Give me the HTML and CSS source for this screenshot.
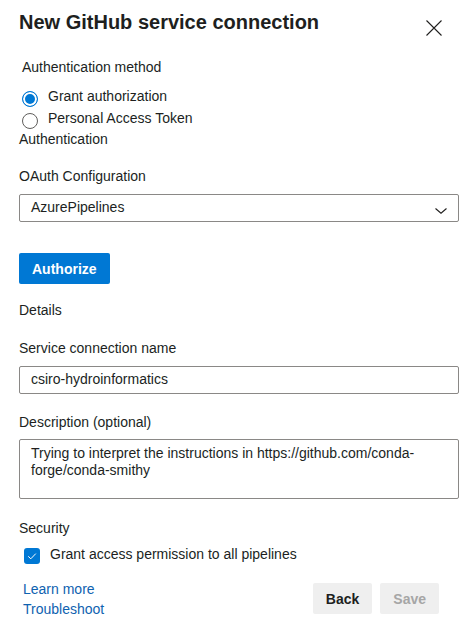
FILE: index.html
```html
<!DOCTYPE html>
<html lang="en">
<head>
<meta charset="utf-8">
<title>New GitHub service connection</title>
<link rel="stylesheet" href="styles.css">
</head>
<body>
<div class="dialog">
  <header class="header">
    <h1 class="title">New GitHub service connection</h1>
    <button class="close" aria-label="Close">
      <svg width="16" height="16" viewBox="0 0 16 16"><path d="M0.5 0.5 L15.5 15.5 M15.5 0.5 L0.5 15.5" stroke="#201f1e" stroke-width="1.1" fill="none"/></svg>
    </button>
  </header>

  <div class="auth-method">Authentication method</div>
  <div class="radio-group">
    <div class="radio-row"><span class="radio checked"></span><span>Grant authorization</span></div>
    <div class="radio-row"><span class="radio"></span><span>Personal Access Token</span></div>
  </div>
  <div class="section-title">Authentication</div>

  <div class="label label-oauth">OAuth Configuration</div>
  <div class="field dropdown">
    <span>AzurePipelines</span>
    <svg class="chevron" width="12" height="6" viewBox="0 0 12 6"><path d="M0.5 0.5 L6 5.2 L11.5 0.5" stroke="#201f1e" stroke-width="1.1" fill="none"/></svg>
  </div>

  <button class="btn-primary">Authorize</button>

  <div class="section-title details">Details</div>

  <div class="label label-name">Service connection name</div>
  <div class="field">csiro-hydroinformatics</div>

  <div class="label label-desc">Description (optional)</div>
  <div class="field textarea">Trying to interpret the instructions in https://github.com/conda-forge/conda-smithy</div>

  <div class="section-title security">Security</div>
  <div class="check-row"><span class="checkbox"><svg width="16" height="16" viewBox="0 0 16 16"><path d="M4.2 8.3 L6.8 10.8 L11.8 5.6" stroke="#fff" stroke-width="1" fill="none"/></svg></span><span>Grant access permission to all pipelines</span></div>

  <footer class="footer">
    <div class="links">
      <a href="#" class="link">Learn more</a>
      <a href="#" class="link">Troubleshoot</a>
    </div>
    <div class="actions">
      <button class="btn">Back</button>
      <button class="btn disabled">Save</button>
    </div>
  </footer>
</div>
</body>
</html>
```

FILE: styles.css
```css
* { box-sizing: border-box; }
html, body {
  margin: 0;
  padding: 0;
  background: #fff;
}
body {
  font-family: "Liberation Sans", Arial, sans-serif;
  font-size: 14px;
  line-height: 20px;
  color: #201f1e;
}
.dialog {
  width: 472px;
  padding: 8px 13px 0 19px;
  display: flex;
  flex-direction: column;
}
.header {
  display: flex;
  justify-content: space-between;
  align-items: flex-start;
}
.title {
  margin: 0;
  font-size: 20px;
  line-height: 28px;
  font-weight: 700;
}
.close {
  margin: 12px 17px 0 0;
  padding: 0;
  border: 0;
  background: none;
  width: 16px;
  height: 16px;
  display: block;
}
.close svg { display: block; }
.auth-method {
  margin-top: 21px;
  padding-left: 3px;
}
.radio-group {
  margin-top: 8px;
  padding-left: 3px;
  display: flex;
  flex-direction: column;
}
.radio-row {
  height: 22px;
  display: flex;
  align-items: flex-start;
  gap: 10px;
  padding-top: 1px;
}
.radio {
  width: 16px;
  height: 16px;
  margin-top: 5px;
  border-radius: 50%;
  border: 1px solid #605e5c;
  background: #fff;
  flex: none;
}
.radio.checked {
  border-color: #0078d4;
  background: #0078d4;
  box-shadow: inset 0 0 0 2px #fff;
}
.section-title { margin-top: 0; }
.label-oauth { margin-top: 17px; }
.field {
  margin-top: 9px;
  height: 28px;
  border: 1px solid #8a8886;
  border-radius: 2px;
  padding: 2px 11px 4px;
}
.label-oauth + .field { margin-top: 8px; }
.dropdown {
  display: flex;
  align-items: flex-start;
  justify-content: space-between;
}
.chevron {
  margin-top: 11px;
  margin-right: 0;
}
.btn-primary {
  align-self: flex-start;
  margin-top: 31px;
  height: 31px;
  padding: 0 13px;
  border: 0;
  border-radius: 2px;
  background: #0078d4;
  color: #fff;
  font: 700 14px/20px "Liberation Sans", Arial, sans-serif;
}
.details { margin-top: 16px; }
.label-name { margin-top: 18px; }
.label-name + .field { margin-top: 8px; }
.label-desc { margin-top: 18px; }
.label-desc + .field { margin-top: 7px; }
.textarea {
  height: 60px;
  padding-top: 5px;
  line-height: 17px;
}
.security { margin-top: 19px; }
.check-row {
  margin-top: 6px;
  padding-left: 5px;
  display: flex;
  align-items: flex-start;
  gap: 10px;
}
.checkbox {
  width: 16px;
  height: 16px;
  margin-top: 4px;
  border-radius: 3px;
  background: #0078d4;
  flex: none;
}
.checkbox svg { display: block; }
.footer {
  margin-top: 15px;
  display: flex;
  justify-content: space-between;
  align-items: flex-start;
  padding-right: 20px;
}
.links {
  display: flex;
  flex-direction: column;
  padding-left: 4px;
}
.link {
  color: #0f62b0;
  text-decoration: none;
}
.actions {
  display: flex;
  gap: 8px;
  margin-top: 4px;
}
.btn {
  height: 31px;
  padding: 0 13px;
  border: 0;
  border-radius: 2px;
  background: #efefef;
  color: #201f1e;
  font: 700 14px/20px "Liberation Sans", Arial, sans-serif;
}
.btn.disabled { color: #a6a6a6; }
```
